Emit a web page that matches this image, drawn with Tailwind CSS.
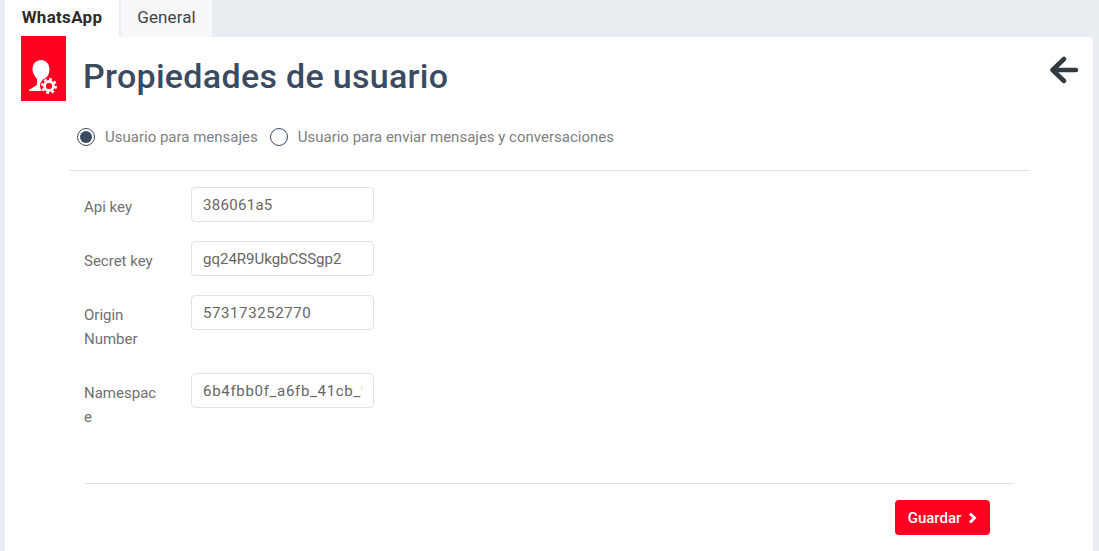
<!DOCTYPE html>
<html lang="es">
<head>
    <meta charset="UTF-8">
    <title>Propiedades de usuario</title>
    <script src="https://cdn.jsdelivr.net/npm/@tailwindcss/browser@4"></script>
</head>
<body class="h-[551px] overflow-hidden bg-[#e9edf1] font-['Roboto',sans-serif]">
    <!-- Tabs -->
    <nav class="flex h-[37px] pl-[5px] text-[17px]">
        <a class="w-[114px] bg-white text-center leading-[35px] font-bold tracking-[0.3px] text-[#2b2b2b]">WhatsApp</a>
        <a class="ml-[2px] w-[91px] bg-[#f6f8f9] text-center leading-[35px] tracking-[0.1px] text-[#444]">General</a>
    </nav>

    <main class="relative ml-[5px] mr-[6px] h-[514px] rounded-tr-[4px] bg-white">
        <!-- Header -->
        <header class="flex items-start pl-[16px] pr-[14px]">
            <div class="-mt-px h-[65px] w-[45px] bg-[#ff0022]">
                <svg width="45" height="65" viewBox="0 0 45 65" fill="#fff">
                    <path d="M20 24c5 0 8.500 4 8.500 9.500 0 4-2 7-4 9.500v3l3 3-1 6H9c-1 0-1.500-1-.5-1.500 3-2 6-3 7.500-5V43c-2-2.500-4.500-5.500-4.500-9.500C11.500 28 15 24 20 24z"/>
                    <circle cx="28" cy="50" r="9" fill="#ff0022"/>
                    <circle cx="28" cy="50" r="4.500" fill="none" stroke="#fff" stroke-width="2.800"/>
                    <circle cx="28" cy="50" r="6.800" fill="none" stroke="#fff" stroke-width="2.400" stroke-dasharray="2.700 2.640"/>
                </svg>
            </div>
            <h1 class="ml-[17px] mt-[17px] text-[34px] leading-[44px] font-medium tracking-[0.3px] text-[#3a4a60]">Propiedades de usuario</h1>
            <svg class="ml-auto mt-[17px]" width="30" height="30" viewBox="0 0 30 30" fill="none" stroke="#2f3a42" stroke-width="4.500" stroke-linecap="round" stroke-linejoin="round">
                <path d="M27 16H4M15 5 3.500 16 15 27"/>
            </svg>
        </header>

        <!-- User type -->
        <div class="ml-[72px] mt-[24px] flex h-[24px] items-center text-[15px] text-[#808080]">
            <span class="flex h-[18px] w-[18px] items-center justify-center rounded-full border border-[#3a4a60]">
                <span class="h-[12px] w-[12px] rounded-full bg-[#3a4a60]"></span>
            </span>
            <span class="ml-[10px]">Usuario para mensajes</span>
            <span class="ml-[12px] h-[18px] w-[18px] rounded-full border border-[#3a4a60]"></span>
            <span class="ml-[10px]">Usuario para enviar mensajes y conversaciones</span>
        </div>

        <hr class="ml-[64px] mr-[63px] mt-[21px] border-[#dfe3e6]">

        <!-- Form -->
        <form class="ml-[79px] mt-[16px] flex flex-col gap-[19px] text-[15px] leading-[24px] text-[#707070]">
            <div class="flex h-[35px] items-start">
                <label class="w-[76px] pt-[8px]">Api key</label>
                <input value="386061a5" class="ml-[31px] h-[35px] w-[183px] rounded-[4px] border border-[#dfe3e6] px-[11px] pt-[1px] text-[15px] tracking-[0.3px] text-[#666] outline-none">
            </div>
            <div class="flex h-[35px] items-start">
                <label class="w-[76px] pt-[8px]">Secret key</label>
                <input value="gq24R9UkgbCSSgp2" class="ml-[31px] h-[35px] w-[183px] rounded-[4px] border border-[#dfe3e6] px-[11px] pt-[1px] text-[15px] text-[#666] outline-none">
            </div>
            <div class="flex h-[59px] items-start">
                <label class="w-[76px] pt-[8px]">Origin Number</label>
                <input value="573173252770" class="ml-[31px] h-[35px] w-[183px] rounded-[4px] border border-[#dfe3e6] px-[11px] pt-[1px] text-[15px] tracking-[0.6px] text-[#666] outline-none">
            </div>
            <div class="flex h-[59px] items-start">
                <label class="w-[76px] pt-[8px] break-all">Namespace</label>
                <input value="6b4fbb0f_a6fb_41cb_9a2e" class="ml-[31px] h-[35px] w-[183px] rounded-[4px] border border-[#dfe3e6] px-[11px] pt-[1px] text-[15px] tracking-[0.7px] text-[#666] outline-none">
            </div>
        </form>

        <hr class="ml-[80px] mr-[79px] mt-[51px] border-[#dfe3e6]">

        <!-- Save -->
        <div class="mr-[103px] mt-[16px] flex justify-end">
            <button class="flex h-[35px] w-[95px] items-center justify-center gap-[7px] rounded-[4px] bg-[#ff0022] pt-[1px] text-[15px] font-medium text-white">
                Guardar
                <svg width="9" height="12" viewBox="0 0 9 12" fill="none" stroke="#fff" stroke-width="2.800"><path d="M2 1.500 6.500 6 2 10.500"/></svg>
            </button>
        </div>
    </main>
</body>
</html>
